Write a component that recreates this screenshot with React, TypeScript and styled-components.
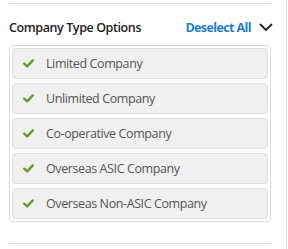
import React from "react";
import styled, { createGlobalStyle } from "styled-components";

const GlobalStyle = createGlobalStyle`
  html, body {
    margin: 0;
    padding: 0;
    background: #fff;
  }
  body {
    font-family: "Open Sans", "Liberation Sans", sans-serif;
  }
`;

const Page = styled.div`
  display: flex;
  width: 288px;
  height: 249px;
  padding-left: 9px;
  box-sizing: border-box;
`;

const Panel = styled.section`
  width: 262px;
  margin-top: 3px;
  border-top: 1px solid #dddddd;
`;

const Header = styled.div`
  display: flex;
  align-items: center;
  padding: 15px 0 9px;
  line-height: 17px;
`;

const Title = styled.h3`
  flex: 1;
  margin: 0;
  font-size: 12.5px;
  font-weight: 600;
  letter-spacing: -0.4px;
  color: #222;
`;

const DeselectLink = styled.a`
  font-size: 12.5px;
  font-weight: 700;
  letter-spacing: -0.6px;
  color: #1a7fd4;
  text-decoration: none;
  cursor: pointer;
`;

const Chevron = styled.svg`
  margin-left: 8px;
  margin-right: -2px;
`;

const OptionList = styled.ul`
  list-style: none;
  margin: 0;
  padding: 2px;
  border: 1px solid #dddddd;
  border-radius: 4px;
  display: flex;
  flex-direction: column;
  gap: 4px;
`;

const Option = styled.li<{ $checked?: boolean }>`
  display: flex;
  align-items: center;
  height: 31px;
  box-sizing: border-box;
  padding-left: 10px;
  background: ${(p) => (p.$checked ? "#f0f0f0" : "#fff")};
  border: 1px solid #dedede;
  border-radius: 4px;
  font-size: 12.5px;
  letter-spacing: -0.4px;
  color: #555;
`;

const Check = styled.svg`
  width: 11px;
  height: 9px;
  margin-right: 12px;
`;

const Footer = styled.div`
  margin-top: 21px;
  border-top: 1px solid #dddddd;
`;

const Spacer = styled.div`
  flex: 1;
`;

const Divider = styled.div`
  width: 1px;
  background: #e2e2e2;
  margin-right: 1px;
`;

const options = [
  "Limited Company",
  "Unlimited Company",
  "Co-operative Company",
  "Overseas ASIC Company",
  "Overseas Non-ASIC Company",
];

export default function App() {
  return (
    <>
      <GlobalStyle />
      <Page>
        <Panel>
          <Header>
            <Title>Company Type Options</Title>
            <DeselectLink>Deselect All</DeselectLink>
            <Chevron width="14" height="9" viewBox="0 0 14 9">
              <path d="M1.5 1.5 L7 7 L12.5 1.5" fill="none" stroke="#222" strokeWidth="1.8" strokeLinecap="round" strokeLinejoin="round" />
            </Chevron>
          </Header>
          <OptionList>
            {options.map((o) => (
              <Option key={o} $checked>
                <Check viewBox="0 0 11 9">
                  <path d="M1.2 4.6 L4.2 7.4 L9.8 1.4" fill="none" stroke="#5e9e22" strokeWidth="2.3" strokeLinecap="round" strokeLinejoin="round" />
                </Check>
                {o}
              </Option>
            ))}
          </OptionList>
          <Footer />
        </Panel>
        <Spacer />
        <Divider />
      </Page>
    </>
  );
}
